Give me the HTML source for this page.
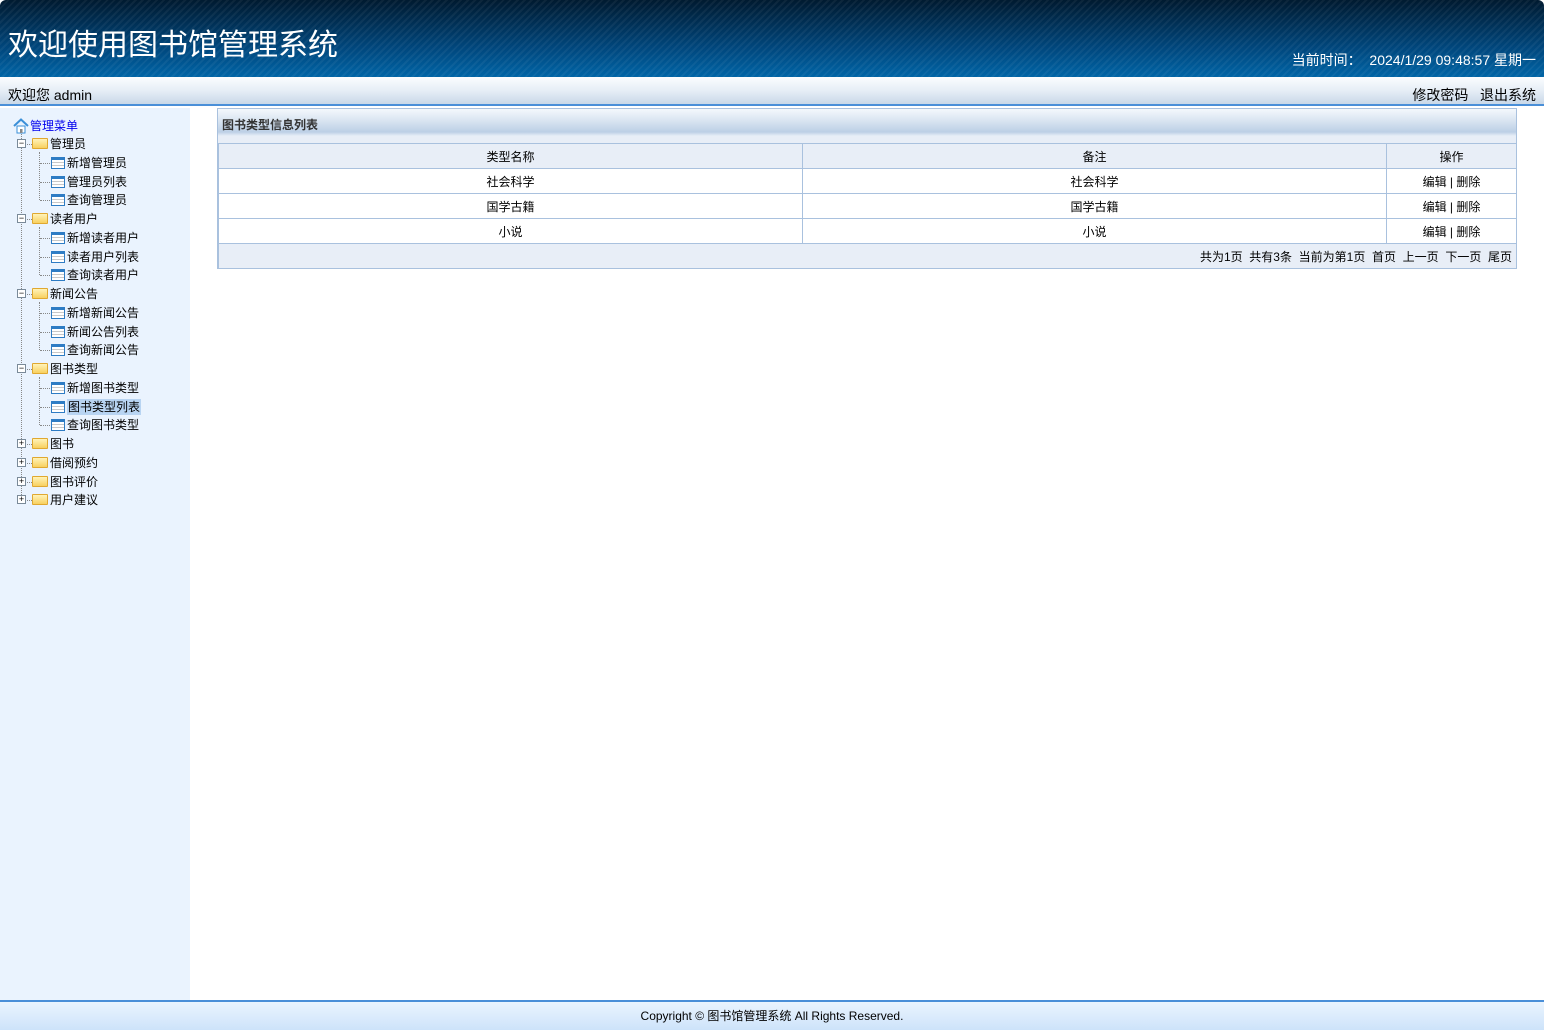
<!DOCTYPE html>
<html><head><meta charset="utf-8">
<style>
*{margin:0;padding:0;box-sizing:border-box}
body{width:1544px;height:1030px;overflow:hidden;font-family:"Liberation Sans","Noto Sans CJK SC",sans-serif;background:#fff;position:relative;font-size:12px;color:#000}
#hd{position:absolute;left:0;top:0;width:1544px;height:77px;
background:repeating-linear-gradient(135deg,rgba(255,255,255,0.05) 0 2px,rgba(0,0,0,0) 2px 5px),linear-gradient(#001a30,#00457a 60%,#0064a6);border-radius:6px 6px 0 0}
#hd h1{position:absolute;left:8px;top:20px;font-size:30px;font-weight:normal;color:#fff;letter-spacing:0}
#hd .t{position:absolute;right:8px;top:50px;font-size:14px;color:#fff}
#bar{position:absolute;left:0;top:77px;width:1544px;height:29px;background:linear-gradient(#fbfdff,#e6eef6 50%,#c9d8e8);border-bottom:2px solid #4a8fd8}
#bar .l{position:absolute;left:8px;top:8px;font-size:14px}
#bar .r{position:absolute;right:8px;top:8px;font-size:14px;word-spacing:0}
#side{position:absolute;left:0;top:108px;width:190px;height:892px;background:#eaf3fe}
.it{position:absolute;height:18px;line-height:18px;font-size:12px;white-space:nowrap}
.fold{display:inline-block;width:16px;height:11px;background:linear-gradient(#fff3b8,#f8d060);border:1px solid #e0a830;border-radius:1px;vertical-align:-1px;margin-right:2px}
.pg{display:inline-block;width:14px;height:12px;border:1px solid #2e7cc4;border-top:3px solid #2e7cc4;background:repeating-linear-gradient(#fff 0 2px,#c8c8c8 2px 3px);vertical-align:-2px;margin-right:2px}
.bx{position:absolute;width:9px;height:9px;border:1px solid #7a8a99;background:#fff;font-size:9px;line-height:7px;text-align:center;color:#000}
.dv{position:absolute;border-left:1px dotted #888}
.dh{position:absolute;border-top:1px dotted #888}
#panel{position:absolute;left:217px;top:108px;width:1300px;height:161px;border:1px solid #a9c1de}
#pt{height:27px;background:linear-gradient(#f4f8fc,#dbe6f2 40%,#bccfe6 85%,#e8eff7);font-size:12px;color:#333;padding:9px 0 0 4px;font-weight:bold;line-height:14px}
#gap{height:7px;background:#e8eef7}
table{border-collapse:collapse;width:1299px;font-size:12px}
td{border:1px solid #a9c1de;text-align:center;height:25px}
tr.h td{background:#e8eef7}
#ft{position:absolute;left:0;top:1000px;width:1544px;height:30px;border-top:2px solid #4a8fd8;background:linear-gradient(#eaf4fe,#cde3fa);text-align:center;font-size:12px;padding-top:5px}
</style></head><body>
<div id="hd"><h1>欢迎使用图书馆管理系统</h1><div class="t">当前时间：&nbsp; 2024/1/29 09:48:57 星期一</div></div>
<div id="bar"><span class="l">欢迎您 admin</span><span class="r">修改密码&nbsp;&nbsp; 退出系统</span></div>
<div id="side">
<div class="dv" style="left:21px;top:26px;height:367px"></div>
<div class="dv" style="left:39px;top:44px;height:48px"></div>
<div class="dv" style="left:39px;top:119px;height:48px"></div>
<div class="dv" style="left:39px;top:194px;height:48px"></div>
<div class="dv" style="left:39px;top:269px;height:48px"></div>
<svg style="position:absolute;left:13px;top:10px" width="16" height="16" viewBox="0 0 16 16"><path d="M1 8 L8 1.5 L15 8" fill="none" stroke="#3a8fd8" stroke-width="2"/><rect x="4" y="8" width="8" height="7" fill="#fff" stroke="#3a8fd8"/><rect x="7" y="11" width="2.5" height="4" fill="#888"/></svg>
<div class="it" style="left:30px;top:9px;color:#0000ee">管理菜单</div>
</div>
<div id="panel"><div id="pt">图书类型信息列表</div><div id="gap"></div>
<table>
<tr class="h"><td style="width:584px">类型名称</td><td style="width:584px">备注</td><td>操作</td></tr>
<tr><td>社会科学</td><td>社会科学</td><td>编辑 | 删除</td></tr>
<tr><td>国学古籍</td><td>国学古籍</td><td>编辑 | 删除</td></tr>
<tr><td>小说</td><td>小说</td><td>编辑 | 删除</td></tr>
<tr class="h"><td colspan="3" style="text-align:right;padding-right:4px">共为1页&nbsp; 共有3条&nbsp; 当前为第1页&nbsp; 首页&nbsp; 上一页&nbsp; 下一页&nbsp; 尾页</td></tr>
</table></div>
<div id="ft">Copyright © 图书馆管理系统 All Rights Reserved.</div>
<script>
var s=document.getElementById('side');
var items=[[0,'管理员','-'],[1,'新增管理员'],[1,'管理员列表'],[1,'查询管理员'],[0,'读者用户','-'],[1,'新增读者用户'],[1,'读者用户列表'],[1,'查询读者用户'],[0,'新闻公告','-'],[1,'新增新闻公告'],[1,'新闻公告列表'],[1,'查询新闻公告'],[0,'图书类型','-'],[1,'新增图书类型'],[1,'图书类型列表',0,1],[1,'查询图书类型'],[0,'图书','+'],[0,'借阅预约','+'],[0,'图书评价','+'],[0,'用户建议','+']];
var h='';
items.forEach(function(a,i){var y=27+i*18.75;var c=y+9;
if(a[0]==0){h+='<div class="bx" style="left:17px;top:'+(c-5)+'px">'+(a[2]=='-'?'−':'+')+'</div><div class="dh" style="left:27px;top:'+c+'px;width:5px"></div><div class="it" style="left:32px;top:'+y+'px"><span class="fold"></span>'+a[1]+'</div>';}
else{h+='<div class="dh" style="left:40px;top:'+c+'px;width:10px"></div><div class="it" style="left:51px;top:'+y+'px"><span class="pg"></span><span style="'+(a[3]?'background:#b8d4f2;padding:1px 1px;':'')+'">'+a[1]+'</span></div>';}
});
s.insertAdjacentHTML('beforeend',h);
</script>
</body></html>
